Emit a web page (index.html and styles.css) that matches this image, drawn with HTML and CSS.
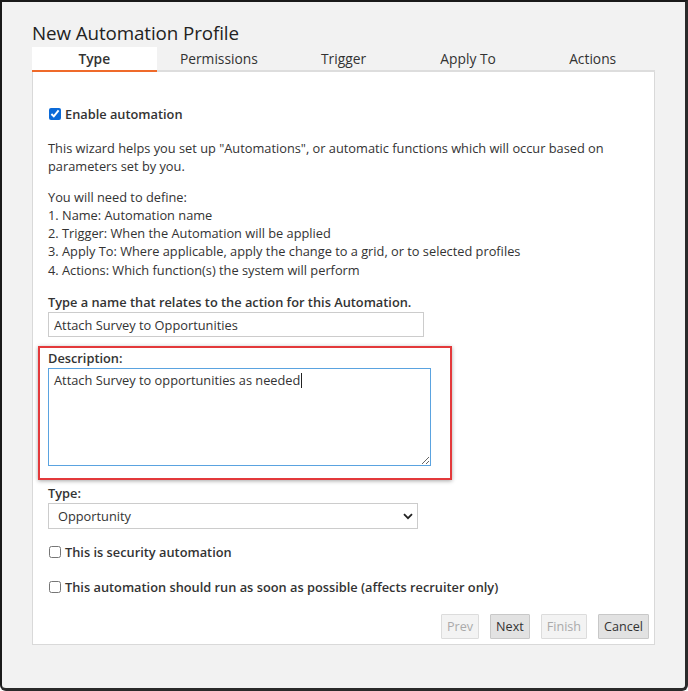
FILE: index.html
```html
<!DOCTYPE html>
<html>
<head>
<meta charset="utf-8">
<link rel="stylesheet" href="styles.css">
</head>
<body>
<div class="frame">
  <h1 class="title">New Automation Profile</h1>
  <div class="tabs">
    <div class="tab active">Type</div>
    <div class="tab">Permissions</div>
    <div class="tab">Trigger</div>
    <div class="tab">Apply To</div>
    <div class="tab">Actions</div>
  </div>
  <div class="panel">
    <label class="check bold first"><input type="checkbox" checked> Enable automation</label>
    <p class="para">This wizard helps you set up "Automations", or automatic functions which will occur based on parameters set by you.</p>
    <p class="para list">You will need to define:<br>1. Name: Automation name<br>2. Trigger: When the Automation will be applied<br>3. Apply To: Where applicable, apply the change to a grid, or to selected profiles<br>4. Actions: Which function(s) the system will perform</p>
    <div class="label name-label">Type a name that relates to the action for this Automation.</div>
    <input class="text-input" type="text" value="Attach Survey to Opportunities">
    <div class="highlight">
      <div class="label">Description:</div>
      <div class="ta-wrap">
        <textarea class="textarea">Attach Survey to opportunities as needed</textarea>
        <span class="caret"></span>
      </div>
    </div>
    <div class="label type-label">Type:</div>
    <div class="select">
      <span>Opportunity</span>
      <svg width="10" height="7" viewBox="0 0 10 7"><path d="M1 1.2 L5 5.2 L9 1.2" fill="none" stroke="#222" stroke-width="1.8"/></svg>
    </div>
    <label class="check bold c2"><input type="checkbox"> This is security automation</label>
    <label class="check bold c3"><input type="checkbox"> This automation should run as soon as possible (affects recruiter only)</label>
    <div class="buttons">
      <button class="btn disabled">Prev</button>
      <button class="btn">Next</button>
      <button class="btn disabled">Finish</button>
      <button class="btn">Cancel</button>
    </div>
  </div>
</div>
</body>
</html>
```
FILE: styles.css
```css
html, body { margin: 0; padding: 0; }
body { font-family: "Open Sans", "Liberation Sans", sans-serif; color: #333; background: #fff; }
.frame {
  box-sizing: border-box;
  width: 688px; height: 691px;
  background: #f2f2f2;
  border-top: 2px solid #1a1a1a;
  border-left: 2px solid #1a1a1a;
  border-right: 3px solid #2a2a2a;
  border-bottom: 3px solid #2a2a2a;
  border-radius: 0 0 6px 6px;
  padding: 0 0 0 30px;
}
.title { margin: 0; padding-top: 19px; font-size: 18.8px; font-weight: 400; line-height: 24px; color: #222; letter-spacing: -0.1px; }
.tabs { display: flex; width: 623px; margin-top: 2px; }
.tab { flex: 1; height: 23px; line-height: 23px; text-align: center; font-size: 13.8px; color: #333; border-bottom: 2px solid #ddd; }
.tab.active { background: #fff; border-bottom-color: #ef6a2a; font-weight: 600; }
.panel {
  box-sizing: border-box;
  width: 623px; height: 573px;
  background: #fff;
  border: 1px solid #d9d9d9; border-top: none;
  padding: 0 0 0 15px;
  font-size: 12.8px;
  position: relative;
}
.check { display: flex; align-items: center; gap: 4px; line-height: 18px; }
.check input { margin: 0 0 0 1px; width: 12px; height: 12px; accent-color: #0b6ad8; }
.bold { font-weight: 600; }
.first { padding-top: 33px; }
.para { margin: 16px 0 0; line-height: 18.3px; width: 580px; }
.list { margin-top: 12px; }
.label { font-weight: 600; line-height: 18px; margin-top: 13px; }
.name-label { margin-top: 14px; }
.text-input {
  display: block; box-sizing: border-box;
  width: 376px; height: 25px; margin: 1px 0 0;
  border: 1px solid #ccc; padding: 0 5px;
  font: inherit; color: #333; outline: none;
}
.highlight {
  margin: 9px 0 0 -10px; width: 414px; box-sizing: border-box;
  border: 2px solid #e3393b;
  box-shadow: 0 1px 4px rgba(0,0,0,0.35);
  padding: 1px 19px 12px 8px;
}
.highlight .label { margin-top: 0; }
.ta-wrap { position: relative; margin-top: 1px; }
.textarea {
  display: block; box-sizing: border-box;
  width: 383px; height: 98px; margin: 0;
  border: 1px solid #5aa3e0; padding: 2px 5px;
  font: inherit; color: #333; line-height: 18px; outline: none; resize: vertical;
}
.caret { position: absolute; left: 253px; top: 5px; width: 1px; height: 15px; background: #222; }
.type-label { margin-top: 4px; }
.select {
  box-sizing: border-box; width: 370px; height: 26px; margin-top: 1px;
  border: 1px solid #ccc; display: flex; align-items: center; justify-content: space-between;
  padding: 0 4px 0 9px;
}
.c2 { margin-top: 14px; }
.c3 { margin-top: 17px; }
.buttons { position: absolute; right: 5px; bottom: 5px; display: flex; gap: 11px; }
.btn {
  font: inherit; font-size: 12.6px; height: 25px; padding: 0 5px; line-height: 21px; margin: 0;
  border: 1px solid #c8c8c8; background: #e2e2e2; color: #333; border-radius: 1px;
}
.btn.disabled { background: #f3f3f3; border-color: #dcdcdc; color: #aaa; }
```
